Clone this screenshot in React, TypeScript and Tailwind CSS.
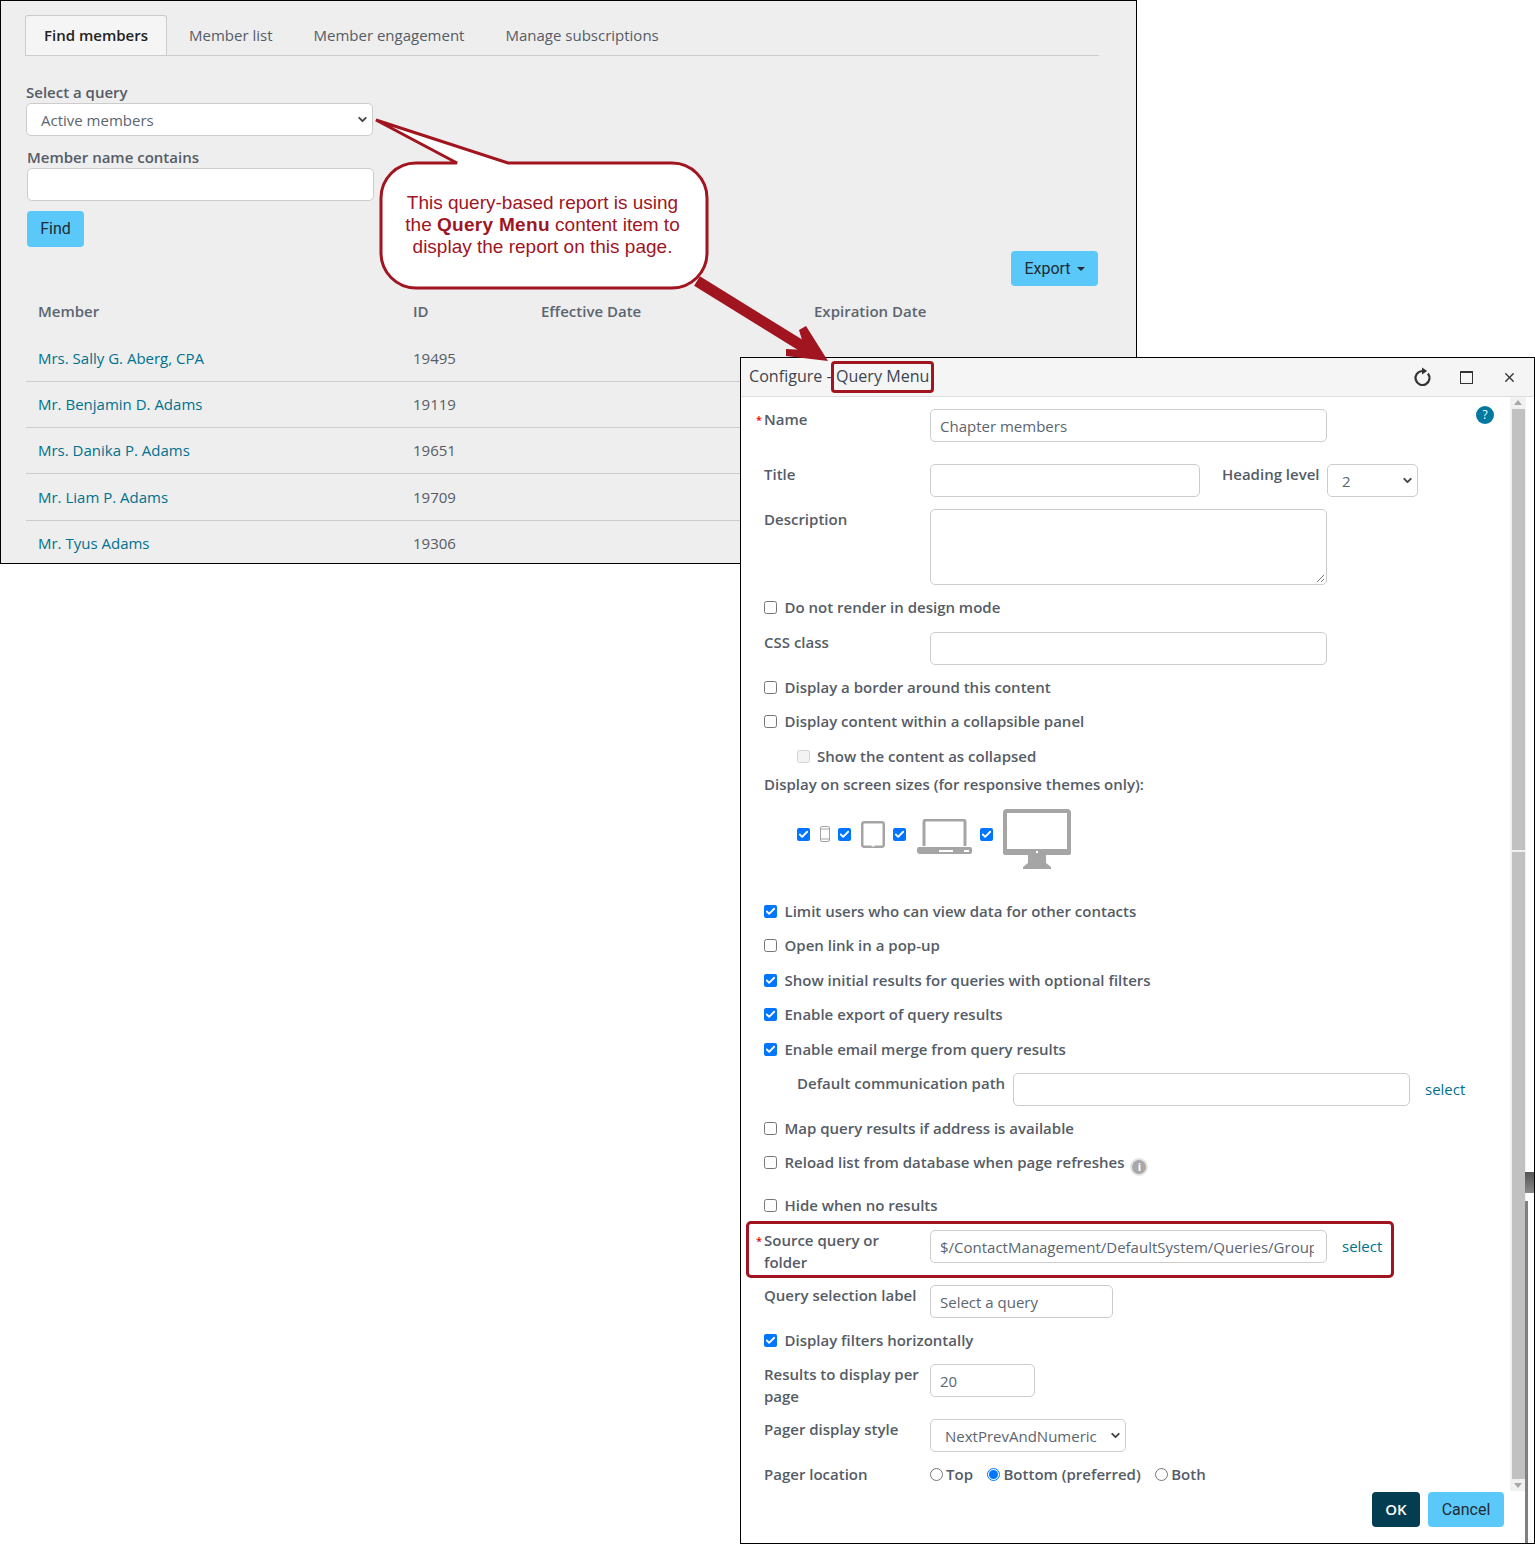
import React from 'react';
import { Check, ChevronDown, X } from 'lucide-react';

const members = [
  ['Mrs. Sally G. Aberg, CPA', '19495'],
  ['Mr. Benjamin D. Adams', '19119'],
  ['Mrs. Danika P. Adams', '19651'],
  ['Mr. Liam P. Adams', '19709'],
  ['Mr. Tyus Adams', '19306'],
];

function Box({ checked, disabled }: { checked?: boolean; disabled?: boolean }) {
  if (checked) {
    return (
      <span className="flex h-[13px] w-[13px] shrink-0 items-center justify-center rounded-[2px] bg-[#0075ff]">
        <Check size={11} strokeWidth={4} className="text-white" />
      </span>
    );
  }
  return (
    <span className={`block h-[13px] w-[13px] shrink-0 rounded-[2.5px] border ${disabled ? 'border-[#d4d4d4] bg-[#f3f3f3]' : 'border-[#767676] bg-white'}`} />
  );
}

function CheckRow({ label, checked, h }: { label: string; checked?: boolean; h: string }) {
  return (
    <div className={`flex items-start ${h}`}>
      <span className="flex h-5 items-center">
        <Box checked={checked} />
      </span>
      <span className="ml-[7.5px] leading-5 font-semibold">{label}</span>
    </div>
  );
}

function Field({ className, value }: { className: string; value?: string }) {
  return (
    <div className={`flex h-[33px] items-center rounded-[5px] border border-[#ccc] bg-white px-[9px] pt-[2px] text-[#5c6570] ${className}`}>
      <span className="block overflow-hidden whitespace-nowrap">{value}</span>
    </div>
  );
}

function Select({ className, value }: { className: string; value: string }) {
  return (
    <div className={`flex h-[33px] items-center justify-between rounded-[5px] border border-[#ccc] bg-white pr-[3px] pl-[14px] text-[#5c6570] ${className}`}>
      <span className="pt-[2px]">{value}</span>
      <ChevronDown size={13} strokeWidth={3.5} className="text-[#444]" />
    </div>
  );
}

function Radio({ label, checked }: { label: string; checked?: boolean }) {
  return (
    <span className="flex items-center">
      <span className={`flex h-[13px] w-[13px] items-center justify-center rounded-full border ${checked ? 'border-[#0075ff]' : 'border-[#767676]'}`}>
        {checked && <span className="h-[9px] w-[9px] rounded-full bg-[#0075ff]" />}
      </span>
      <span className="ml-[3px] font-semibold">{label}</span>
    </span>
  );
}

function Label({ children, required }: { children: React.ReactNode; required?: boolean }) {
  return (
    <div className="relative w-[166px] shrink-0 pr-[8px] leading-[21.5px] font-semibold">
      {required && <span className="absolute top-0 left-[-8px] text-[11px] text-[#e00]">*</span>}
      {children}
    </div>
  );
}

function RefreshIcon() {
  return (
    <svg width="19" height="20" viewBox="0 0 19 20" className="text-[#333]">
      <path d="M14.9 6.5A7 7 0 1 1 9 4" fill="none" stroke="currentColor" strokeWidth="2.2" />
      <path d="M9 0.4 14.2 4 9 7.6z" fill="currentColor" />
    </svg>
  );
}

function PhoneIcon() {
  return (
    <svg width="10" height="16" viewBox="0 0 10 16" className="ml-[10px]">
      <rect x="0.5" y="0.5" width="9" height="15" rx="1.5" fill="none" stroke="#a5a5a5" />
      <rect x="1" y="2.5" width="8" height="1" fill="#a5a5a5" />
      <rect x="1" y="12.5" width="8" height="1" fill="#a5a5a5" />
    </svg>
  );
}

function TabletIcon() {
  return (
    <svg width="24" height="27" viewBox="0 0 24 27" className="ml-[10px]">
      <rect x="1.25" y="1.25" width="21.5" height="24.5" rx="2" fill="none" stroke="#a5a5a5" strokeWidth="2.5" />
      <rect x="10.5" y="24" width="3" height="1.5" fill="#fff" />
    </svg>
  );
}

function LaptopIcon() {
  return (
    <svg width="55" height="35" viewBox="0 0 55 35" className="mt-[5px] ml-[11px]">
      <path d="M7 27V3a2 2 0 0 1 2-2h37a2 2 0 0 1 2 2v24" fill="none" stroke="#a5a5a5" strokeWidth="3" />
      <path d="M2 28h51a2 2 0 0 1 2 2v3a2 2 0 0 1-2 2H3a3 3 0 0 1-3-3v-2a2 2 0 0 1 2-2z" fill="#a5a5a5" />
      <rect x="22" y="31" width="14" height="2" fill="#fff" />
      <rect x="47" y="31" width="5" height="2" fill="#fff" />
    </svg>
  );
}

function DesktopIcon() {
  return (
    <svg width="68" height="60" viewBox="0 0 68 60" className="mt-[10px] ml-[10px]">
      <rect x="2" y="2" width="64" height="42" rx="2" fill="none" stroke="#a5a5a5" strokeWidth="4" />
      <rect x="0" y="40" width="68" height="6" rx="2" fill="#a5a5a5" />
      <circle cx="34" cy="43" r="1.2" fill="#fff" />
      <path d="M25 46h18v8l5 4v2H20v-2l5-4z" fill="#a5a5a5" />
    </svg>
  );
}

function BackPage() {
  return (
    <div className="absolute top-0 left-0 h-[564px] w-[1137px] overflow-hidden border border-black bg-[#eee] text-[15px] text-[#555c66]">
      <div className="ml-[24px] flex h-[55px] w-[1074px] items-end border-b border-[#ccc] pt-[15px]">
        <div className="flex h-[40px] w-[142px] items-center justify-center rounded-t-[3px] border border-b-0 border-[#ccc] bg-[#f5f5f5] font-semibold text-[#222]">
          Find members
        </div>
        <div className="flex h-[40px] items-center pl-[22px]">Member list</div>
        <div className="flex h-[40px] items-center pl-[41px]">Member engagement</div>
        <div className="flex h-[40px] items-center pl-[41px]">Manage subscriptions</div>
      </div>
      <div className="flex justify-between pr-[38px] pl-[25px]">
        <div className="w-[347px]">
          <div className="mt-[26px] h-[21px] leading-[21px] font-semibold">Select a query</div>
          <Select className="w-[347px]" value="Active members" />
          <div className="mt-[11px] ml-[1px] h-[21px] leading-[21px] font-semibold">Member name contains</div>
          <Field className="ml-[1px] w-[347px]" />
          <div className="mt-[10px] ml-[1px] flex h-[36px] w-[57px] items-center justify-center rounded-[4px] bg-[#5bc8fa] font-['Roboto',sans-serif] text-[16px] text-[#222b33]">
            Find
          </div>
        </div>
        <div className="mt-[195px] flex h-[35px] w-[87px] items-center justify-center gap-[6px] rounded-[4px] bg-[#5bc8fa] font-['Roboto',sans-serif] text-[16px] text-[#222b33]">
          Export
          <span className="h-0 w-0 border-x-[4px] border-t-[4px] border-x-transparent border-t-[#222b33]" />
        </div>
      </div>
      <div className="mt-[2px] ml-[25px] w-[1074px]">
        <div className="flex h-[47.6px] items-center pb-[2px] font-semibold text-[#5c6570]">
          <span className="w-[387px] pl-[12px]">Member</span>
          <span className="w-[128px]">ID</span>
          <span className="w-[273px]">Effective Date</span>
          <span>Expiration Date</span>
        </div>
        {members.map(([name, id], i) => (
          <div key={id} className={`flex h-[46.25px] items-center ${i < 4 ? 'border-b border-[#ccc]' : ''}`}>
            <span className="w-[387px] pl-[12px] text-[#00718f]">{name}</span>
            <span>{id}</span>
          </div>
        ))}
      </div>
    </div>
  );
}

function ConfigDialog() {
  return (
    <div className="absolute top-[357px] left-[740px] flex h-[1187px] w-[795px] flex-col border border-black bg-white text-[15px] text-[#555c66]">
      <div className="flex h-[39px] shrink-0 items-center justify-between border-b border-[#ddd] bg-[#f5f5f5] pr-[17px] pl-[8px] text-[16.1px] text-[#3c4650]">
        <span className="pb-[2px]">Configure - Query Menu</span>
        <div className="flex items-center text-[#333]">
          <RefreshIcon />
          <span className="ml-[28px] h-[13px] w-[13px] border border-t-2 border-[#333]" />
          <X size={15} strokeWidth={2.2} className="ml-[29px]" />
        </div>
      </div>
      <div className="flex min-h-0 flex-1">
        <div className="relative min-w-0 flex-1 pt-[12px] pl-[23px]">
          <span className="absolute top-[9px] right-[16px] flex h-[18px] w-[18px] items-center justify-center rounded-full bg-[#00789f] text-[12px] text-white">?</span>

          <div className="flex h-[55px]">
            <Label required>Name</Label>
            <Field className="w-[397px]" value="Chapter members" />
          </div>
          <div className="flex h-[45px]">
            <Label>Title</Label>
            <Field className="w-[270px]" />
            <span className="ml-[22px] w-[105px] leading-[21px] font-semibold whitespace-nowrap">Heading level</span>
            <Select className="w-[91px]" value="2" />
          </div>
          <div className="flex h-[88px]">
            <Label>Description</Label>
            <div className="relative h-[76px] w-[397px] rounded-[5px] border border-[#ccc]">
              <svg width="10" height="10" viewBox="0 0 10 10" className="absolute right-[1px] bottom-[1px]">
                <path d="M9 2 2 9M9 6 6 9" stroke="#777" fill="none" />
              </svg>
            </div>
          </div>
          <CheckRow h="h-[35px]" label="Do not render in design mode" />
          <div className="flex h-[45px]">
            <Label>CSS class</Label>
            <Field className="w-[397px]" />
          </div>
          <CheckRow h="h-[34px]" label="Display a border around this content" />
          <CheckRow h="h-[35px]" label="Display content within a collapsible panel" />
          <div className="flex h-[28px] items-start pl-[33px]">
            <span className="flex h-5 items-center">
              <Box disabled />
            </span>
            <span className="ml-[7px] leading-5 font-semibold">Show the content as collapsed</span>
          </div>
          <div className="h-[32px] leading-5 font-semibold">Display on screen sizes (for responsive themes only):</div>
          <div className="flex h-[95px] items-start pl-[33px]">
            <div className="flex h-[56px] items-center">
              <Box checked />
              <PhoneIcon />
              <span className="ml-[8px]"><Box checked /></span>
              <TabletIcon />
              <span className="ml-[8px]"><Box checked /></span>
              <LaptopIcon />
              <span className="ml-[8px]"><Box checked /></span>
              <DesktopIcon />
            </div>
          </div>
          <CheckRow h="h-[34px]" checked label="Limit users who can view data for other contacts" />
          <CheckRow h="h-[35px]" label="Open link in a pop-up" />
          <CheckRow h="h-[34px]" checked label="Show initial results for queries with optional filters" />
          <CheckRow h="h-[35px]" checked label="Enable export of query results" />
          <CheckRow h="h-[34px]" checked label="Enable email merge from query results" />
          <div className="flex h-[45px] pl-[33px]">
            <span className="w-[216px] leading-5 font-semibold">Default communication path</span>
            <Field className="w-[397px]" />
            <span className="mt-[6px] ml-[15px] leading-5 text-[#00718f]">select</span>
          </div>
          <CheckRow h="h-[34px]" label="Map query results if address is available" />
          <div className="flex h-[43px] items-start">
            <span className="flex h-5 items-center">
              <Box />
            </span>
            <span className="ml-[7.5px] leading-5 font-semibold">Reload list from database when page refreshes</span>
            <span className="mt-[6px] ml-[6px] flex h-[18px] w-[18px] items-center justify-center rounded-full border-2 border-[#e3e3e3] bg-[#a8a8a8] text-[11px] font-bold text-white">i</span>
          </div>
          <CheckRow h="h-[35px]" label="Hide when no results" />
          <div className="flex h-[55px]">
            <Label required>Source query or folder</Label>
            <Field className="w-[397px] pr-[12px]" value="$/ContactManagement/DefaultSystem/Queries/Group" />
            <span className="mt-[6px] ml-[15px] leading-5 text-[#00718f]">select</span>
          </div>
          <div className="flex h-[45px]">
            <Label>Query selection label</Label>
            <Field className="w-[183px]" value="Select a query" />
          </div>
          <CheckRow h="h-[34px]" checked label="Display filters horizontally" />
          <div className="flex h-[55px]">
            <Label>Results to display per page</Label>
            <Field className="w-[105px]" value="20" />
          </div>
          <div className="flex h-[45px]">
            <Label>Pager display style</Label>
            <Select className="w-[196px]" value="NextPrevAndNumeric" />
          </div>
          <div className="flex h-[21px]">
            <Label>Pager location</Label>
            <div className="flex items-center gap-[14.5px]">
              <Radio label="Top" />
              <Radio checked label="Bottom (preferred)" />
              <Radio label="Both" />
            </div>
          </div>
          <div className="absolute right-[6px] bottom-[16px] flex gap-[8px]">
            <span className="flex h-[35px] w-[48px] items-center justify-center rounded-[4px] bg-[#033d52] font-semibold text-white">OK</span>
            <span className="flex h-[35px] w-[76px] items-center justify-center rounded-[4px] bg-[#5bc8fa] font-['Roboto',sans-serif] text-[16px] text-[#222b33]">Cancel</span>
          </div>
        </div>
        <div className="mr-[8px] mb-[52px] flex w-[16px] shrink-0 flex-col items-center bg-[#f1f1f1] pt-[3px] pb-[3px]">
          <span className="h-0 w-0 border-x-[4px] border-b-[5px] border-x-transparent border-b-[#a8a8a8]" />
          <div className="mt-[4px] h-[441px] w-[13px] bg-[#c1c1c1]" />
          <div className="mt-[2px] mb-[4px] w-[13px] flex-1 bg-[#c1c1c1]" />
          <span className="h-0 w-0 border-x-[4px] border-t-[5px] border-x-transparent border-t-[#a8a8a8]" />
        </div>
      </div>
    </div>
  );
}

export default function App() {
  return (
    <div className="relative h-[1544px] w-[1535px] overflow-hidden bg-white font-['Open_Sans',sans-serif]">
      <BackPage />
      <ConfigDialog />

      {/* stray bits of the stitched screenshot along the dialog's right edge */}
      <div className="absolute top-[1172px] left-[1525px] h-[21px] w-[9px] bg-gradient-to-b from-[#555] to-[#8a8a8a]" />
      <div className="absolute top-[1201px] left-[1525px] h-[342px] w-[3px] bg-[#808080]" />

      {/* annotations on top of the two windows */}
      <svg width="1535" height="1544" className="pointer-events-none absolute top-0 left-0">
        <path
          d="M457 163 L376 120 L508 163 H672 A35 35 0 0 1 707 198 V253 A35 35 0 0 1 672 288 H416 A35 35 0 0 1 381 253 V198 A35 35 0 0 1 416 163 Z"
          fill="#fff"
          stroke="#a0151f"
          strokeWidth="3"
        />
        <path d="M697 281 L815 354" stroke="#a0151f" strokeWidth="11" fill="none" />
        <path d="M828 361 L786 356 L786 349 L805 350 L799 330 L806 326 Z" fill="#a0151f" />
      </svg>
      <div className="absolute top-[192px] left-[379px] w-[327px] text-center font-['Liberation_Sans',sans-serif] text-[19px] leading-[22px] text-[#a0151f]">
        This query-based report is using
        <br />
        the <b className="tracking-[0.3px]">Query Menu</b> content item to
        <br />
        display the report on this page.
      </div>
      <div className="absolute top-[361px] left-[831px] h-[32px] w-[103px] rounded-[4px] border-[3px] border-[#a0151f]" />
      <div className="absolute top-[1221px] left-[746px] h-[57px] w-[648px] rounded-[5px] border-[3px] border-[#a0151f]" />
    </div>
  );
}
